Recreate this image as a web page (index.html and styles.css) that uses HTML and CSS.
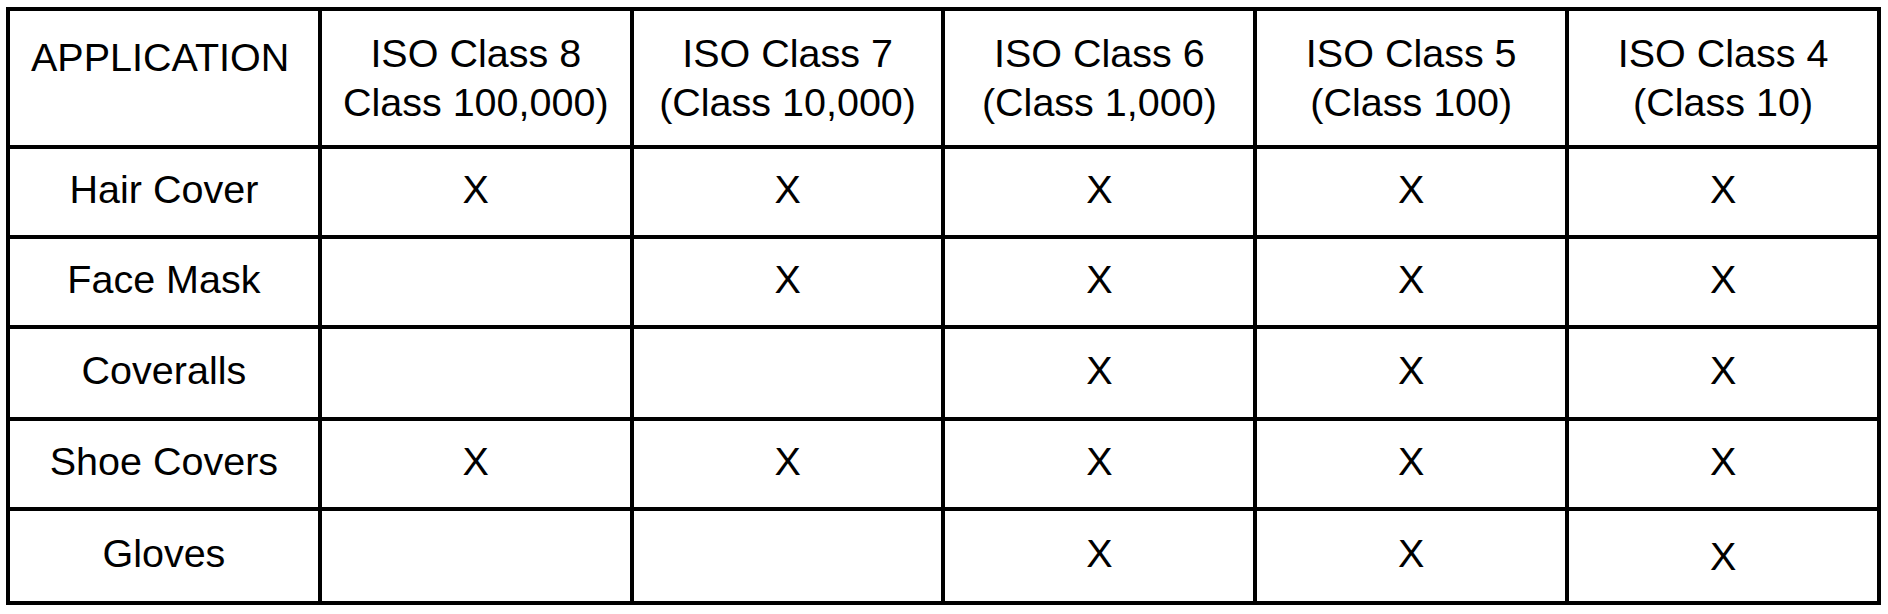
FILE: index.html
```html
<!DOCTYPE html>
<html lang="en">
<head>
<meta charset="utf-8">
<title>Cleanroom garment requirements</title>
<link rel="stylesheet" href="styles.css">
</head>
<body>
<table class="grid">
  <colgroup>
    <col class="c"><col class="c"><col class="c"><col class="c"><col class="c"><col class="c">
  </colgroup>
  <thead>
    <tr class="head">
      <th class="app">APPLICATION</th>
      <th>ISO Class 8<br>Class 100,000)</th>
      <th>ISO Class 7<br>(Class 10,000)</th>
      <th>ISO Class 6<br>(Class 1,000)</th>
      <th>ISO Class 5<br>(Class 100)</th>
      <th>ISO Class 4<br>(Class 10)</th>
    </tr>
  </thead>
  <tbody>
    <tr class="r90">
      <td>Hair Cover</td><td>X</td><td>X</td><td>X</td><td>X</td><td>X</td>
    </tr>
    <tr class="r90">
      <td>Face Mask</td><td></td><td>X</td><td>X</td><td>X</td><td>X</td>
    </tr>
    <tr class="r92">
      <td>Coveralls</td><td></td><td></td><td>X</td><td>X</td><td>X</td>
    </tr>
    <tr class="r90">
      <td>Shoe Covers</td><td>X</td><td>X</td><td>X</td><td>X</td><td>X</td>
    </tr>
    <tr class="r94">
      <td>Gloves</td><td></td><td></td><td>X</td><td>X</td><td class="low">X</td>
    </tr>
  </tbody>
</table>
</body>
</html>
```

FILE: styles.css
```css
html, body {
  background: #ffffff;
}

body {
  margin: 7px 0 0 6px;
  font-family: "Liberation Sans", Arial, sans-serif;
  color: #000000;
}

.grid {
  border-collapse: collapse;
  table-layout: fixed;
  width: 1875px;
}

.grid .c {
  width: 311.83px;
}

.grid th,
.grid td {
  border: 4px solid #000000;
  padding: 0;
  text-align: center;
  vertical-align: middle;
  font-size: 39.5px;
  font-weight: normal;
  line-height: 49px;
}

.grid td {
  padding-bottom: 5px;
}

.head {
  height: 138px;
}

.grid th.app {
  vertical-align: top;
  text-align: left;
  padding: 22px 0 0 21px;
}

.r90 { height: 90px; }
.r92 { height: 92px; }
.r94 { height: 94px; }

.grid td.low {
  padding-bottom: 0;
}
```
